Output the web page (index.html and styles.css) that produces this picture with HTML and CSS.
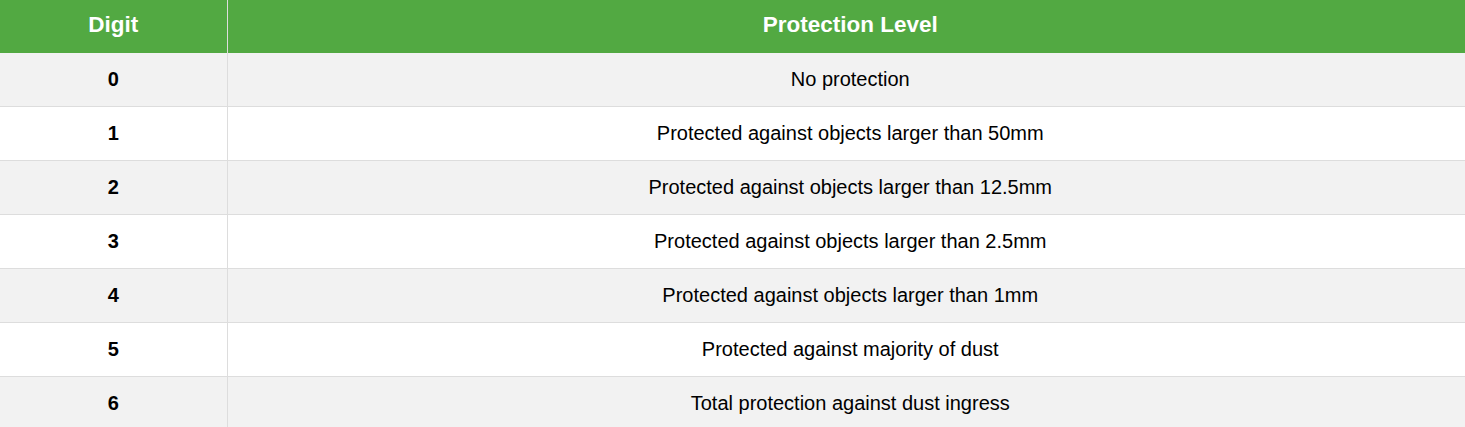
FILE: index.html
```html
<!DOCTYPE html>
<html>
<head>
<meta charset="utf-8">
<link rel="stylesheet" href="styles.css">
</head>
<body>
<table class="ip-table">
  <colgroup><col class="col-digit"><col></colgroup>
  <thead>
    <tr><th>Digit</th><th class="level">Protection Level</th></tr>
  </thead>
  <tbody>
    <tr><td class="digit">0</td><td class="level">No protection</td></tr>
    <tr><td class="digit">1</td><td class="level">Protected against objects larger than 50mm</td></tr>
    <tr><td class="digit">2</td><td class="level">Protected against objects larger than 12.5mm</td></tr>
    <tr><td class="digit">3</td><td class="level">Protected against objects larger than 2.5mm</td></tr>
    <tr><td class="digit">4</td><td class="level">Protected against objects larger than 1mm</td></tr>
    <tr><td class="digit">5</td><td class="level">Protected against majority of dust</td></tr>
    <tr><td class="digit">6</td><td class="level">Total protection against dust ingress</td></tr>
  </tbody>
</table>
</body>
</html>
```
FILE: styles.css
```css
html, body {
  margin: 0;
  padding: 0;
  background: #ffffff;
}
body {
  font-family: "Liberation Sans", Arial, sans-serif;
  color: #000;
}
.ip-table {
  width: 100%;
  border-collapse: collapse;
  table-layout: fixed;
}
.col-digit {
  width: 227px;
}
.ip-table th {
  background: #52a942;
  color: #ffffff;
  font-weight: bold;
  font-size: 22.5px;
  height: 49px;
  padding: 0 0 4px 0;
  text-align: center;
  vertical-align: middle;
  border-right: 1px solid #dddddd;
}
.ip-table td {
  font-size: 20px;
  height: 53px;
  padding: 0;
  text-align: center;
  vertical-align: middle;
  border-bottom: 1px solid #dddddd;
  border-right: 1px solid #dddddd;
}
.ip-table .level {
  padding-left: 8px;
}
.ip-table th:last-child,
.ip-table td:last-child {
  border-right: none;
}
.ip-table tbody tr:nth-child(odd) {
  background: #f2f2f2;
}
.ip-table td.digit {
  font-weight: bold;
}
```
